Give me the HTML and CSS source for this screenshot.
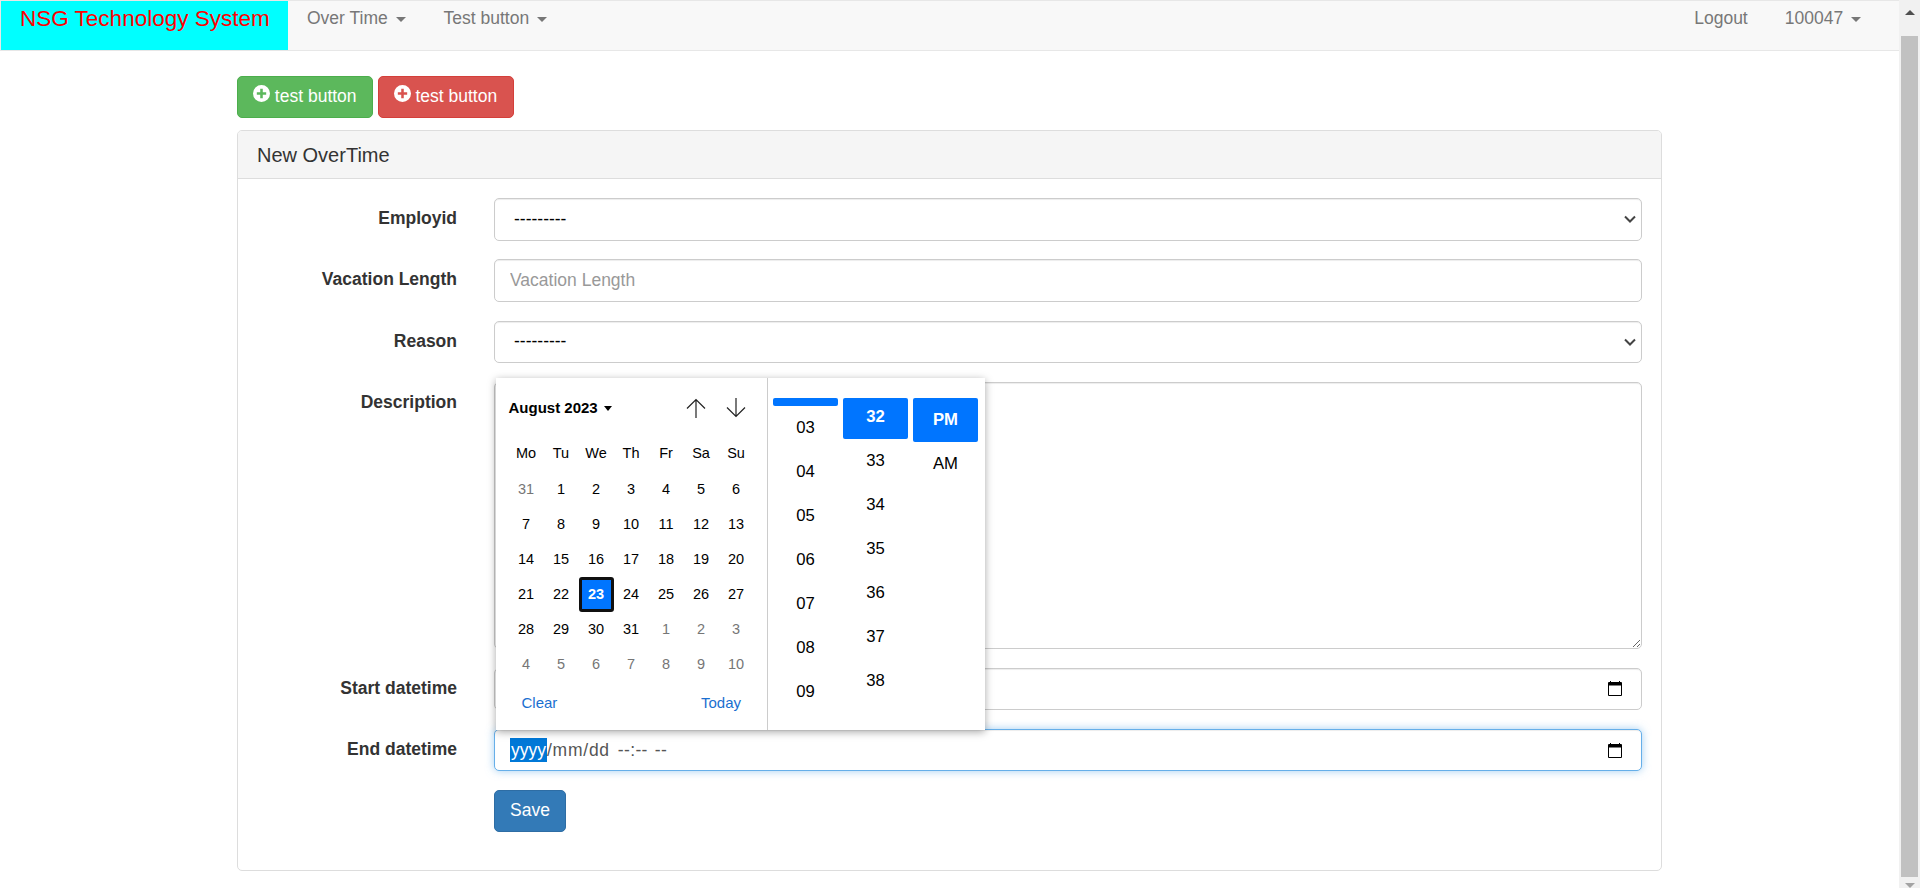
FILE: index.html
```html
<!DOCTYPE html>
<html lang="en">
<head>
    <meta charset="UTF-8">
    <meta name="viewport" content="width=device-width, initial-scale=1.0">
    <title>New OverTime</title>
    <link rel="stylesheet" href="styles.css">
</head>
<body>
    <div class="page">
        <nav class="navbar">
            <a href="#" class="brand">NSG Technology System</a>
            <ul class="nav-list">
                <li><a href="#">Over Time <span class="caret"></span></a></li>
                <li><a href="#">Test button <span class="caret"></span></a></li>
            </ul>
            <ul class="nav-list nav-right">
                <li><a href="#">Logout</a></li>
                <li><a href="#">100047 <span class="caret"></span></a></li>
            </ul>
        </nav>

        <div class="container">
            <div class="actions">
                <a href="#" class="btn btn-success">
                    <svg class="plus-icon" viewBox="0 0 16 16"><path fill="currentColor" fill-rule="evenodd" d="M8 0a8 8 0 1 1 0 16A8 8 0 0 1 8 0zM6.800 3.600v3.200H3.600v2.400h3.200v3.200h2.400V9.200h3.200V6.800H9.200V3.600z"/></svg>
                    test button
                </a>
                <a href="#" class="btn btn-danger">
                    <svg class="plus-icon" viewBox="0 0 16 16"><path fill="currentColor" fill-rule="evenodd" d="M8 0a8 8 0 1 1 0 16A8 8 0 0 1 8 0zM6.800 3.600v3.200H3.600v2.400h3.200v3.200h2.400V9.200h3.200V6.800H9.200V3.600z"/></svg>
                    test button
                </a>
            </div>

            <div class="panel">
                <div class="panel-heading">New OverTime</div>
                <form class="panel-body">
                    <div class="form-row">
                        <label class="form-label">Employid</label>
                        <select class="form-control form-select"><option>---------</option></select>
                    </div>
                    <div class="form-row">
                        <label class="form-label">Vacation Length</label>
                        <input class="form-control" type="text" placeholder="Vacation Length">
                    </div>
                    <div class="form-row">
                        <label class="form-label">Reason</label>
                        <select class="form-control form-select"><option>---------</option></select>
                    </div>
                    <div class="form-row">
                        <label class="form-label">Description</label>
                        <textarea class="form-control form-textarea"></textarea>
                    </div>
                    <div class="form-row">
                        <label class="form-label">Start datetime</label>
                        <div class="form-control date-control">
                            <span></span>
                            <svg class="calendar-icon" viewBox="0 0 14 15"><path fill-rule="evenodd" d="M2 0h1v1h8V0h1v1h1a1 1 0 0 1 1 1v12a1 1 0 0 1-1 1H1a1 1 0 0 1-1-1V2a1 1 0 0 1 1-1h1zM1 4.500V14h12V4.500z"/></svg>
                        </div>
                    </div>
                    <div class="form-row">
                        <label class="form-label">End datetime</label>
                        <div class="form-control date-control is-focused">
                            <span class="date-text"><span class="date-selected">yyyy</span><span class="date-part">/mm/dd</span><span class="date-time">--:--</span><span class="date-ampm">--</span></span>
                            <svg class="calendar-icon" viewBox="0 0 14 15"><path fill-rule="evenodd" d="M2 0h1v1h8V0h1v1h1a1 1 0 0 1 1 1v12a1 1 0 0 1-1 1H1a1 1 0 0 1-1-1V2a1 1 0 0 1 1-1h1zM1 4.500V14h12V4.500z"/></svg>

                            <div class="picker">
                                <div class="calendar">
                                    <div class="calendar-head">
                                        <span class="calendar-month">August 2023 <span class="month-caret"></span></span>
                                        <span class="calendar-arrows">
                                            <svg class="arrow-icon" viewBox="0 0 20 20"><path d="M1 10.500L10 1.500l9 9M10 1.500V20"/></svg>
                                            <svg class="arrow-icon" viewBox="0 0 20 20"><path d="M1 9.500l9 9 9-9M10 18.500V0"/></svg>
                                        </span>
                                    </div>
                                    <div class="calendar-grid">
                                        <span>Mo</span><span>Tu</span><span>We</span><span>Th</span><span>Fr</span><span>Sa</span><span>Su</span>
                                        <span class="muted">31</span><span>1</span><span>2</span><span>3</span><span>4</span><span>5</span><span>6</span>
                                        <span>7</span><span>8</span><span>9</span><span>10</span><span>11</span><span>12</span><span>13</span>
                                        <span>14</span><span>15</span><span>16</span><span>17</span><span>18</span><span>19</span><span>20</span>
                                        <span>21</span><span>22</span><span class="today">23</span><span>24</span><span>25</span><span>26</span><span>27</span>
                                        <span>28</span><span>29</span><span>30</span><span>31</span><span class="muted">1</span><span class="muted">2</span><span class="muted">3</span>
                                        <span class="muted">4</span><span class="muted">5</span><span class="muted">6</span><span class="muted">7</span><span class="muted">8</span><span class="muted">9</span><span class="muted">10</span>
                                    </div>
                                    <div class="calendar-foot">
                                        <a href="#">Clear</a>
                                        <a href="#">Today</a>
                                    </div>
                                </div>
                                <div class="time-cols">
                                    <div class="time-col">
                                        <span class="time-item active cut-hour"></span>
                                        <span class="time-item">03</span>
                                        <span class="time-item">04</span>
                                        <span class="time-item">05</span>
                                        <span class="time-item">06</span>
                                        <span class="time-item">07</span>
                                        <span class="time-item">08</span>
                                        <span class="time-item">09</span>
                                    </div>
                                    <div class="time-col">
                                        <span class="time-item active cut-minute">32</span>
                                        <span class="time-item">33</span>
                                        <span class="time-item">34</span>
                                        <span class="time-item">35</span>
                                        <span class="time-item">36</span>
                                        <span class="time-item">37</span>
                                        <span class="time-item">38</span>
                                    </div>
                                    <div class="time-col">
                                        <span class="time-item active">PM</span>
                                        <span class="time-item">AM</span>
                                    </div>
                                </div>
                            </div>
                        </div>
                    </div>
                    <div class="form-row form-row-last">
                        <span></span>
                        <div><button type="button" class="btn btn-primary">Save</button></div>
                    </div>
                </form>
            </div>
        </div>
    </div>

    <div class="scrollbar">
        <span class="scroll-arrow scroll-up"></span>
        <span class="scroll-thumb"></span>
        <span class="scroll-arrow scroll-down"></span>
    </div>
</body>
</html>
```

FILE: styles.css
```css
* {
    box-sizing: border-box;
}

html, body {
    height: 100%;
    overflow: hidden;
}

body {
    display: flex;
    margin: 0;
    font-family: "Liberation Sans", Arial, sans-serif;
    font-size: 17.5px;
    line-height: 25px;
    color: #333;
    background: #fff;
}

a {
    text-decoration: none;
}

ul {
    list-style: none;
    margin: 0;
    padding: 0;
}

.page {
    flex: 1;
    min-width: 0;
}

/* navbar */
.navbar {
    display: flex;
    height: 51px;
    background: #f8f8f8;
    border: 1px solid #e7e7e7;
    border-right: 0;
}

.brand {
    width: 287px;
    padding-left: 19px;
    font-size: 22.5px;
    line-height: 35px;
    color: #f00;
    background: #0ff;
}

.nav-list {
    display: flex;
}

.nav-right {
    margin-left: auto;
    margin-right: 19px;
}

.nav-list a {
    display: block;
    padding: 0 19px;
    line-height: 35px;
    color: #777;
}

.nav-right li:first-child a {
    padding-right: 18px;
}

.caret {
    display: inline-block;
    margin-left: 3px;
    vertical-align: middle;
    border-top: 5px solid #777;
    border-left: 5px solid transparent;
    border-right: 5px solid transparent;
}

/* buttons */
.container {
    width: 1425px;
    margin: 0 auto;
    padding-top: 25px;
}

.actions {
    display: flex;
    gap: 5px;
    margin-bottom: 12px;
}

.btn {
    display: inline-block;
    height: 42px;
    padding: 7px 15px;
    font: inherit;
    color: #fff;
    border: 1px solid transparent;
    border-radius: 5px;
}

.btn-success {
    background: #5cb85c;
    border-color: #4cae4c;
}

.btn-danger {
    padding-right: 16px;
    background: #d9534f;
    border-color: #d43f3a;
}

.btn-primary {
    padding-bottom: 9px;
    background: #337ab7;
    border-color: #2e6da4;
}

.plus-icon {
    width: 17px;
    height: 17px;
    vertical-align: 0;
}

/* panel */
.panel {
    height: 741px;
    border: 1px solid #ddd;
    border-radius: 5px;
}

.panel-heading {
    height: 48px;
    padding: 12px 19px 0;
    font-size: 20px;
    line-height: 25px;
    background: #f5f5f5;
    border-bottom: 1px solid #ddd;
    border-radius: 4px 4px 0 0;
}

.panel-body {
    padding: 19px 19px 0;
}

.form-row {
    display: grid;
    grid-template-columns: 200px 1fr;
    column-gap: 37px;
    margin-bottom: 18.75px;
}

.form-label {
    font-weight: bold;
    line-height: 41px;
    text-align: right;
}

.form-control {
    display: block;
    width: 100%;
    height: 42.5px;
    padding: 7.5px 15px;
    font: inherit;
    color: #555;
    background: #fff;
    border: 1px solid #ccc;
    border-radius: 5px;
    box-shadow: inset 0 1px 1px rgba(0,0,0,.075);
}

.form-select {
    padding-left: 19px;
    color: #000;
    appearance: none;
    background: #fff url("data:image/svg+xml,%3Csvg xmlns='http://www.w3.org/2000/svg' viewBox='0 0 12 8'%3E%3Cpath d='M1 1.500l5 5 5-5' fill='none' stroke='%23444' stroke-width='2'/%3E%3C/svg%3E") no-repeat right 5px center / 12px 8px;
}

.form-control::placeholder {
    color: #999;
}

.form-textarea {
    height: 267px;
}

.date-control {
    position: relative;
    display: flex;
    align-items: center;
    justify-content: space-between;
    padding-right: 19px;
}

.is-focused {
    border-color: #66afe9;
    box-shadow: inset 0 1px 1px rgba(0,0,0,.075), 0 0 8px rgba(102,175,233,.6);
}

.date-selected {
    padding: 2px 1px;
    color: #fff;
    background: #0078d7;
}

.date-part {
    letter-spacing: .75px;
}

.date-time {
    margin-left: 8px;
    letter-spacing: .35px;
}

.date-ampm {
    margin-left: 7px;
    letter-spacing: .35px;
}

.calendar-icon {
    width: 14px;
    height: 15px;
}

/* date picker popup */
.picker {
    position: absolute;
    left: 1px;
    bottom: 100%;
    z-index: 10;
    display: flex;
    width: 489px;
    height: 352px;
    color: #000;
    background: #fff;
    box-shadow: 0 2px 8px rgba(0,0,0,.35);
}

.calendar {
    width: 272px;
    padding: 0 13px 0 12.5px;
    border-right: 1px solid #ccc;
}

.calendar-head {
    display: flex;
    align-items: center;
    justify-content: space-between;
    height: 59px;
    padding-right: 8px;
}

.calendar-month {
    font-size: 15px;
    font-weight: bold;
}

.month-caret {
    display: inline-block;
    margin-left: 2px;
    vertical-align: 2px;
    border-top: 5px solid #000;
    border-left: 4px solid transparent;
    border-right: 4px solid transparent;
}

.calendar-arrows {
    display: flex;
    gap: 20px;
    margin-top: 2px;
}

.arrow-icon {
    width: 20px;
    height: 20px;
    fill: none;
    stroke: #222;
    stroke-width: 1.2;
}

.calendar-grid {
    display: grid;
    grid-template-columns: repeat(7, 35px);
    grid-auto-rows: 35px;
    font-size: 14.5px;
    text-align: center;
    line-height: 35px;
}

.calendar-grid span:nth-child(-n+7) {
    line-height: 33px;
}

.muted {
    color: #767676;
}

.today {
    font-weight: bold;
    line-height: 29px;
    color: #fff;
    background: #0075ff;
    border: 3px solid #101010;
    border-radius: 3px;
}

.calendar-foot {
    display: flex;
    justify-content: space-between;
    padding: 8px 13px 0;
    font-size: 15px;
}

.calendar-foot a {
    color: #1a6fd0;
}

.time-cols {
    display: flex;
    gap: 5px;
    padding: 20px 5px 0;
}

.time-col {
    width: 65px;
}

.time-item {
    display: block;
    height: 44px;
    font-size: 16.7px;
    line-height: 44px;
    text-align: center;
}

.time-item.active {
    font-weight: bold;
    color: #fff;
    background: #0075ff;
    border-radius: 2px;
}

.cut-hour {
    height: 8px;
}

.cut-minute {
    height: 41px;
    line-height: 38px;
}

/* page scrollbar */
.scrollbar {
    display: flex;
    flex-direction: column;
    align-items: center;
    width: 21px;
    background: #f1f1f1;
}

.scroll-arrow {
    flex: none;
    width: 0;
    height: 0;
    border-left: 5px solid transparent;
    border-right: 5px solid transparent;
}

.scroll-up {
    margin: 10px 0 21px;
    border-bottom: 5px solid #505050;
}

.scroll-down {
    margin: 6px 0 0;
    border-top: 5px solid #a3a3a3;
}

.scroll-thumb {
    flex: 1;
    width: 17px;
    background: #c1c1c1;
}
```
